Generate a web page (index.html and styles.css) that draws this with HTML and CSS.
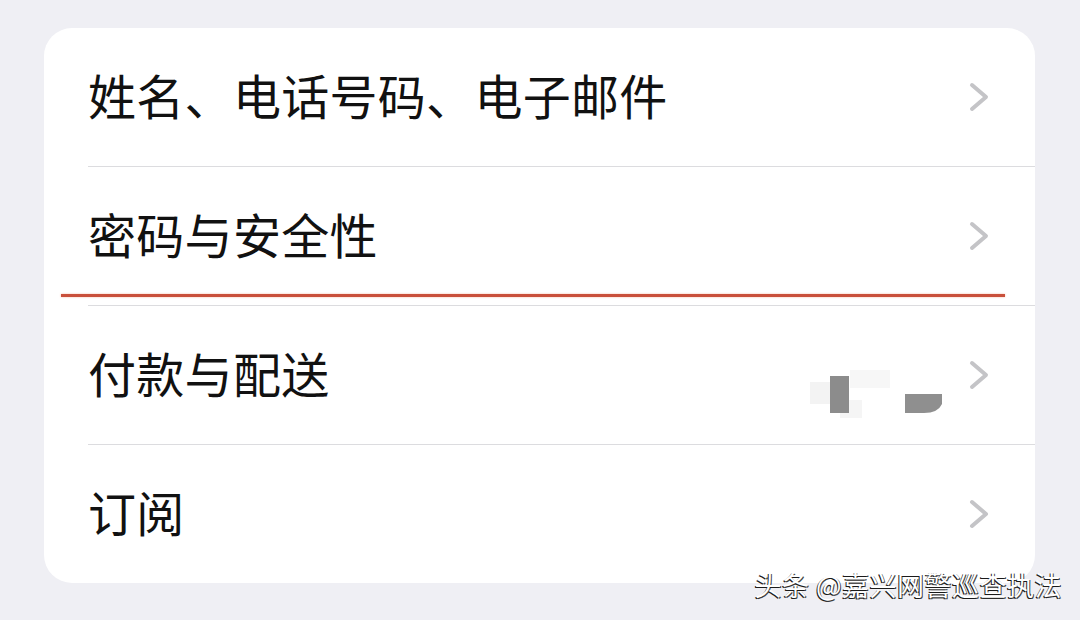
FILE: index.html
```html
<!DOCTYPE html>
<html lang="zh-CN">
<head>
  <meta charset="UTF-8" />
  <meta name="viewport" content="width=device-width, initial-scale=1" />
  <title>Apple ID</title>
  <link rel="stylesheet" href="styles.css">
</head>
<body>
  <div class="card">
    <div class="row">
      <span class="label">姓名、电话号码、电子邮件</span>
      <svg class="chev" viewBox="0 0 22 32" width="22" height="32"><path d="M4 4 L18 16 L4 28" /></svg>
    </div>
    <div class="row">
      <span class="label">密码与安全性</span>
      <svg class="chev" viewBox="0 0 22 32" width="22" height="32"><path d="M4 4 L18 16 L4 28" /></svg>
    </div>
    <div class="row">
      <span class="label">付款与配送</span>
      <svg class="redact" viewBox="0 0 120 48" width="120" height="48">
        <rect x="0" y="12" width="20" height="22" fill="#f3f3f3" />
        <rect x="40" y="0" width="40" height="18" fill="#f7f7f7" />
        <rect x="30" y="30" width="22" height="18" fill="#f5f5f5" />
        <rect x="20" y="6" width="19" height="37" fill="#8c8c8c" />
        <path d="M95 24 H132 V34 Q128 43 114 43 H95 Z" fill="#8f8f8f" />
      </svg>
      <svg class="chev" viewBox="0 0 22 32" width="22" height="32"><path d="M4 4 L18 16 L4 28" /></svg>
    </div>
    <div class="row last">
      <span class="label">订阅</span>
      <svg class="chev" viewBox="0 0 22 32" width="22" height="32"><path d="M4 4 L18 16 L4 28" /></svg>
    </div>
    <div class="mark"></div>
  </div>
  <div class="watermark">头条 @嘉兴网警巡查执法</div>
</body>
</html>
```

FILE: styles.css
```css
* {
  margin: 0; padding: 0; box-sizing: border-box;
}
body {
  width: 1080px;
  height: 620px;
  overflow: hidden;
  background: #efeff4;
  font-family: "Noto Sans CJK SC", "Noto Sans", sans-serif;
  padding: 28px 45px 0 44px;
  position: relative;
}
.card {
  position: relative;
  background: #fff;
  border-radius: 28px;
  overflow: hidden;
}
.row {
  height: 139px;
  margin-left: 44px;
  padding-right: 44px;
  display: flex;
  align-items: center;
  border-bottom: 1px solid #dcdcdf;
}
.row.last {
  height: 138px;
  border-bottom: none;
}
.label {
  flex: 1;
  font-size: 48px;
  color: #111;
  letter-spacing: 0.3px;
  margin-top: -6px;
}
.chev {
  flex-shrink: 0;
  margin-right: 1px;
}
.chev path {
  fill: none;
  stroke: #c4c4c7;
  stroke-width: 4;
  stroke-linecap: round;
  stroke-linejoin: round;
}
.redact {
  align-self: flex-start;
  margin-top: 64px;
  margin-right: 38px;
  overflow: visible;
}
.mark {
  position: absolute;
  left: 17px;
  top: 266px;
  width: 944px;
  height: 3px;
  background: #c9503b;
  box-shadow: 0 0 2px rgba(240, 120, 80, 0.6);
}
.watermark {
  position: absolute;
  right: 18px;
  top: 565px;
  font-size: 27px;
  color: #fff;
  letter-spacing: 0.5px;
  text-shadow: -1px 1px 0 #1a1a1a, 1px 1px 0 #444;
}
```
